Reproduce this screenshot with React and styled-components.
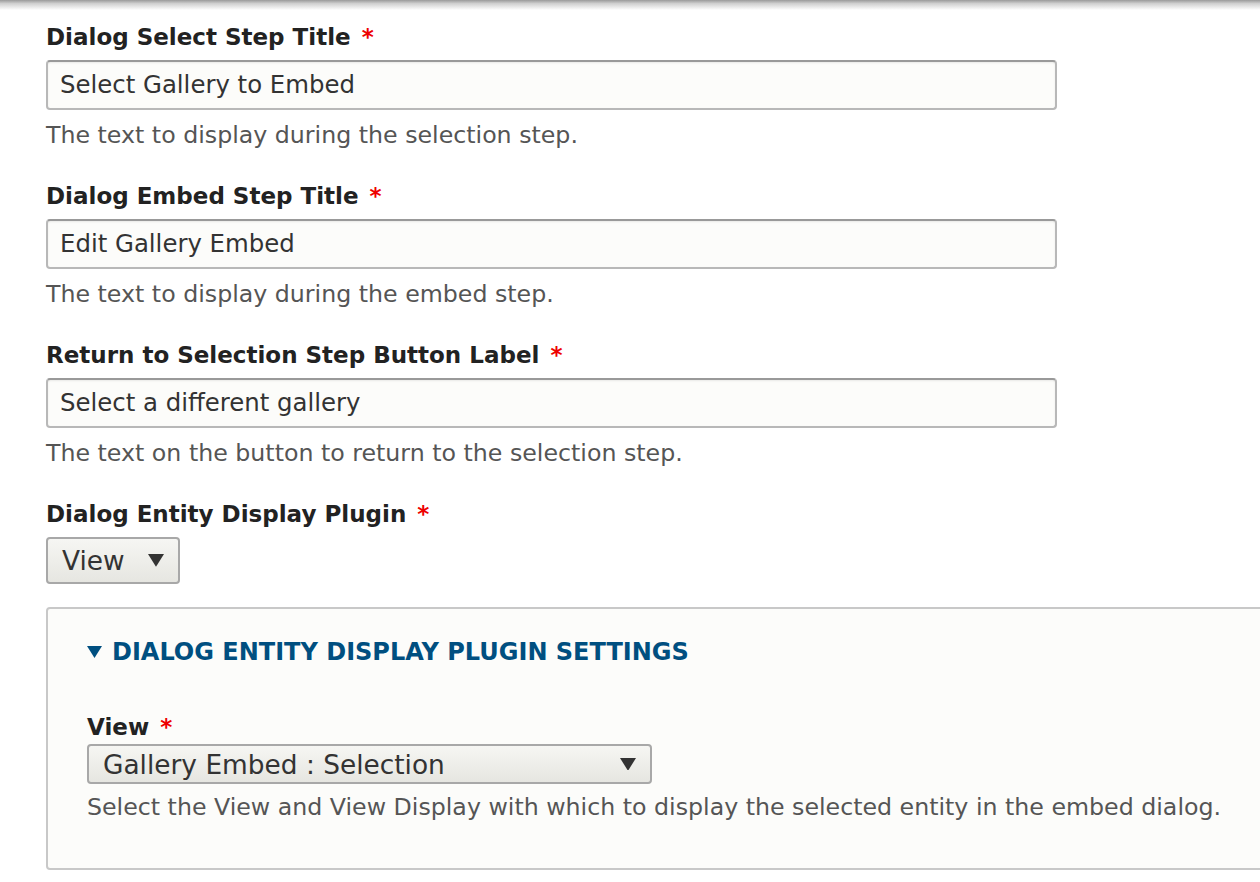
import React from 'react';
import styled, { createGlobalStyle } from 'styled-components';

const Global = createGlobalStyle`
  html, body {
    margin: 0;
    background: #fff;
    overflow: hidden;
  }
  body {
    font-family: "DejaVu Sans", "Liberation Sans", sans-serif;
    color: #333;
  }
`;

const TopShadow = styled.div`
  height: 10px;
  background: linear-gradient(to bottom, #9a9a9a 0%, #cfcfcf 35%, #fff 100%);
`;

const Form = styled.div`
  padding: 14px 0 0 46px;
`;

const Item = styled.div`
  margin-bottom: ${(p) => p.$gap ?? 35}px;
`;

const Label = styled.div`
  font-size: 23px;
  font-weight: bold;
  color: #222;
  line-height: 26px;
  margin-bottom: ${(p) => p.$gap ?? 10}px;
`;

const Star = styled.span`
  color: #e00;
  margin-left: 11px;
`;

const TextInput = styled.div`
  box-sizing: border-box;
  width: 1011px;
  height: 50px;
  border: 2px solid #b8b8b8;
  border-top-color: #999;
  border-radius: 4px;
  background: #fcfcfa;
  box-shadow: inset 0 1px 2px rgba(0, 0, 0, 0.08);
  font-size: 24.4px;
  line-height: 46px;
  padding: 0 12px;
  color: #333;
`;

const Description = styled.div`
  font-size: 23.7px;
  color: #555;
  line-height: 26px;
  margin-top: ${(p) => p.$gap ?? 12}px;
`;

const Select = styled.div`
  box-sizing: border-box;
  display: flex;
  align-items: center;
  justify-content: space-between;
  width: ${(p) => p.$width}px;
  height: ${(p) => p.$height}px;
  border: 2px solid #a8a8a8;
  border-radius: 4px;
  background: linear-gradient(to bottom, #f6f6f3, #e6e6e1);
  font-size: 26.4px;
  color: #333;
  padding: 0 14px 0 14px;
`;

const Fieldset = styled.div`
  box-sizing: border-box;
  width: 1240px;
  margin-top: 23px;
  border: 2px solid #c8c8c8;
  border-radius: 4px;
  background: #fcfcfa;
  padding: 29px 0 48px 39px;
`;

const Summary = styled.div`
  display: flex;
  align-items: center;
  gap: 10px;
  font-size: 24px;
  font-weight: bold;
  color: #004f80;
  text-transform: uppercase;
  margin-bottom: 48px;
`;

const Arrow = ({ size = 16, color = '#333' }) => (
  <svg width={size} height={size * 0.8} viewBox="0 0 10 8">
    <polygon points="0,0 10,0 5,8" fill={color} />
  </svg>
);

const fields = [
  ['Dialog Select Step Title', 'Select Gallery to Embed', 'The text to display during the selection step.'],
  ['Dialog Embed Step Title', 'Edit Gallery Embed', 'The text to display during the embed step.'],
  ['Return to Selection Step Button Label', 'Select a different gallery', 'The text on the button to return to the selection step.'],
];

export default function App() {
  return (
    <>
      <Global />
      <TopShadow />
      <Form>
        {fields.map(([label, value, desc]) => (
          <Item key={label}>
            <Label>
              {label}
              <Star>*</Star>
            </Label>
            <TextInput>{value}</TextInput>
            <Description>{desc}</Description>
          </Item>
        ))}
        <Item $gap={0}>
          <Label>
            Dialog Entity Display Plugin
            <Star>*</Star>
          </Label>
          <Select $width={134} $height={47}>
            View
            <Arrow />
          </Select>
        </Item>
        <Fieldset>
          <Summary>
            <Arrow size={15} color="#004f80" />
            Dialog Entity Display Plugin Settings
          </Summary>
          <Label $gap={4}>
            View
            <Star>*</Star>
          </Label>
          <Select $width={565} $height={40}>
            Gallery Embed : Selection
            <Arrow />
          </Select>
          <Description $gap={10}>
            Select the View and View Display with which to display the selected entity in the embed dialog.
          </Description>
        </Fieldset>
      </Form>
    </>
  );
}
